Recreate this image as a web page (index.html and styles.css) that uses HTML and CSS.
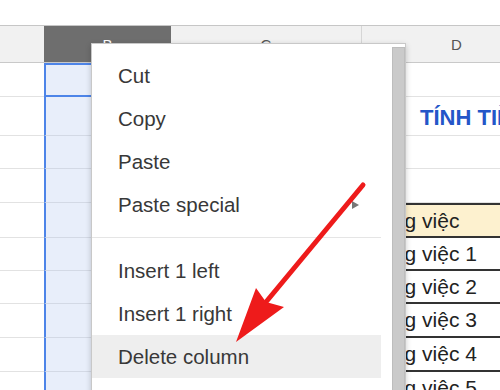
FILE: index.html
```html
<!DOCTYPE html>
<html lang="vi">
<head>
    <meta charset="UTF-8">
    <meta name="viewport" content="width=device-width, initial-scale=1.0">
    <title>Delete column</title>
    <link rel="stylesheet" href="styles.css">
</head>
<body>
    <div class="sheet">
        <!-- column headers -->
        <div class="row head">
            <div class="cell corner"></div>
            <div class="cell letter selected">B</div>
            <div class="cell letter">C</div>
            <div class="cell letter">D</div>
        </div>

        <div class="row h34">
            <div class="cell"></div>
            <div class="cell colb active"></div>
            <div class="cell"></div>
            <div class="cell"></div>
        </div>
        <div class="row h39">
            <div class="cell"></div>
            <div class="cell colb"></div>
            <div class="cell"></div>
            <div class="cell title">TÍNH TIỀN LƯƠNG NHÂN VIÊN</div>
        </div>
        <div class="row h33">
            <div class="cell"></div>
            <div class="cell colb"></div>
            <div class="cell"></div>
            <div class="cell"></div>
        </div>
        <div class="row h34">
            <div class="cell"></div>
            <div class="cell colb"></div>
            <div class="cell"></div>
            <div class="cell"></div>
        </div>
        <div class="row h35">
            <div class="cell"></div>
            <div class="cell colb"></div>
            <div class="cell"></div>
            <div class="cell tbl tbl-head">Công việc</div>
        </div>
        <div class="row h33">
            <div class="cell"></div>
            <div class="cell colb"></div>
            <div class="cell"></div>
            <div class="cell tbl">Công việc 1</div>
        </div>
        <div class="row h33">
            <div class="cell"></div>
            <div class="cell colb"></div>
            <div class="cell"></div>
            <div class="cell tbl">Công việc 2</div>
        </div>
        <div class="row h34">
            <div class="cell"></div>
            <div class="cell colb"></div>
            <div class="cell"></div>
            <div class="cell tbl">Công việc 3</div>
        </div>
        <div class="row h34">
            <div class="cell"></div>
            <div class="cell colb"></div>
            <div class="cell"></div>
            <div class="cell tbl">Công việc 4</div>
        </div>
        <div class="row h34">
            <div class="cell"></div>
            <div class="cell colb"></div>
            <div class="cell"></div>
            <div class="cell tbl">Công việc 5</div>
        </div>
    </div>

    <!-- context menu over the sheet -->
    <div class="menu">
        <div class="menu-list">
            <div class="menu-item">Cut</div>
            <div class="menu-item">Copy</div>
            <div class="menu-item">Paste</div>
            <div class="menu-item">Paste special <span class="sub-arrow"></span></div>
            <div class="menu-sep"></div>
            <div class="menu-item">Insert 1 left</div>
            <div class="menu-item">Insert 1 right</div>
            <div class="menu-item hover">Delete column</div>
        </div>
        <div class="menu-scroll"></div>
    </div>

    <svg class="pointer" width="500" height="390" viewBox="0 0 500 390">
        <line x1="363" y1="185" x2="266" y2="302" stroke="#ee1b1b" stroke-width="5" stroke-linecap="round"/>
        <polygon points="236,342 256,288 266,302 284,307" fill="#ee1b1b"/>
    </svg>
</body>
</html>
```

FILE: styles.css
```css
html, body {
    margin: 0;
    height: 100%;
    overflow: hidden;
    background-color: #ffffff;
    font-family: "Liberation Sans", Arial, sans-serif;
}
.sheet {
    padding-top: 25px;
    width: 552px;
}
.row {
    display: grid;
    grid-template-columns: 44px 127px 191px 190px;
}
.cell {
    box-sizing: border-box;
    border-bottom: 1px solid #e2e2e2;
    display: flex;
    align-items: center;
    white-space: nowrap;
    overflow: hidden;
}
.head {
    height: 38px;
    border-top: 1px solid #c6c6c6;
    box-sizing: border-box;
}
.head .cell {
    background-color: #f1f1f1;
    border-bottom: 1px solid #c9c9c9;
    border-right: 1px solid #d6d6d6;
    justify-content: center;
    font-size: 15px;
    color: #555555;
}
.head .corner {
    border-right: none;
}
.head .selected {
    background-color: #6e6e6e;
    color: #ffffff;
    border-right: none;
}
.h33 { height: 33px; }
.h34 { height: 34px; }
.h35 { height: 35px; }
.h39 { height: 39px; }

.colb {
    background-color: #e8eefa;
    border-left: 2px solid #4d84e8;
    border-bottom-color: #d3d9e5;
}
.active {
    border: 2px solid #4d84e8;
}
.title {
    padding-left: 58px;
    padding-top: 3px;
    font-size: 22px;
    font-weight: bold;
    color: #2456c8;
}
.tbl {
    padding-left: 4px;
    font-size: 21px;
    color: #222222;
    border-bottom: 2px solid #333333;
}
.tbl-head {
    background-color: #fdf1cf;
    border-top: 2px solid #333333;
}

.menu {
    position: absolute;
    left: 91px;
    top: 43px;
    width: 315px;
    height: 370px;
    box-sizing: border-box;
    background-color: #ffffff;
    border: 1px solid #c8c8c8;
    box-shadow: 0 2px 6px rgba(0, 0, 0, 0.2);
    display: flex;
}
.menu-list {
    width: 289px;
    padding-top: 10px;
}
.menu-item {
    height: 43px;
    padding-left: 26px;
    padding-right: 22px;
    display: flex;
    align-items: center;
    justify-content: space-between;
    font-size: 20.5px;
    color: #383838;
}
.menu-item.hover {
    background-color: #eeeeee;
}
.sub-arrow {
    width: 0;
    height: 0;
    border-left: 7px solid #777777;
    border-top: 4px solid transparent;
    border-bottom: 4px solid transparent;
}
.menu-sep {
    margin: 11px 0;
    border-top: 1px solid #e5e5e5;
}
.menu-scroll {
    margin-left: 11px;
    margin-top: 3px;
    width: 13px;
    box-sizing: border-box;
    background-color: #cacaca;
    border: 1px solid #bdbdbd;
}

.pointer {
    position: absolute;
    left: 0;
    top: 0;
    pointer-events: none;
}
```
